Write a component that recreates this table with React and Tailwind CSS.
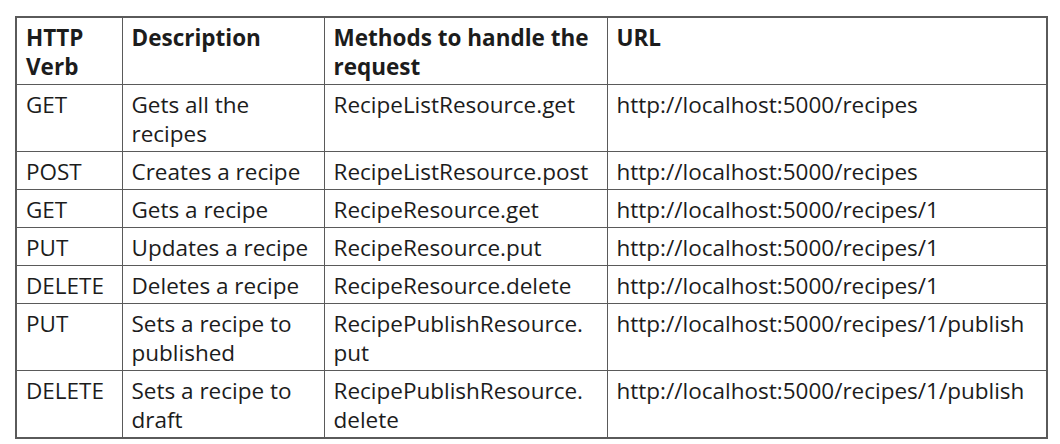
const rows = [
  ['GET', 'Gets all the recipes', 'RecipeListResource.get', 'http://localhost:5000/recipes'],
  ['POST', 'Creates a recipe', 'RecipeListResource.post', 'http://localhost:5000/recipes'],
  ['GET', 'Gets a recipe', 'RecipeResource.get', 'http://localhost:5000/recipes/1'],
  ['PUT', 'Updates a recipe', 'RecipeResource.put', 'http://localhost:5000/recipes/1'],
  ['DELETE', 'Deletes a recipe', 'RecipeResource.delete', 'http://localhost:5000/recipes/1'],
  ['PUT', 'Sets a recipe to published', <>RecipePublishResource.<br />put</>, 'http://localhost:5000/recipes/1/publish'],
  ['DELETE', 'Sets a recipe to draft', <>RecipePublishResource.<br />delete</>, 'http://localhost:5000/recipes/1/publish'],
];

const cell = 'border border-[#5a5a5a] pl-[9px] pr-[4px] pt-[5px] pb-[3px] align-top';

export default function App() {
  return (
    <div className="w-[1060px] h-[444px] bg-white pt-4 pl-[15px] font-['Open_Sans',sans-serif] text-[22.5px] leading-[29px] text-[#1c1c1c]">
      <table className="table-fixed border-collapse w-[1031px] border-2 border-[#5a5a5a]">
        <colgroup>
          <col className="w-[106px]" />
          <col className="w-[202px]" />
          <col className="w-[283px]" />
          <col className="w-[440px]" />
        </colgroup>
        <thead>
          <tr className="h-[67px]">
            <th className={`${cell} text-left font-bold`}>HTTP Verb</th>
            <th className={`${cell} text-left font-bold`}>Description</th>
            <th className={`${cell} text-left font-bold`}>Methods to handle the request</th>
            <th className={`${cell} text-left font-bold`}>URL</th>
          </tr>
        </thead>
        <tbody>
          {rows.map((r, i) => (
            <tr key={i}>
              {r.map((c, j) => (
                <td key={j} className={cell}>{c}</td>
              ))}
            </tr>
          ))}
        </tbody>
      </table>
    </div>
  );
}
